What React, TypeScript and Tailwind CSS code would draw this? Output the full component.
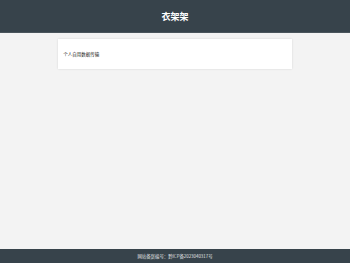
import React from 'react';

const App: React.FC = () => {
    return (
        <div className="min-h-screen flex flex-col bg-[#f3f3f3] font-['Noto_Sans_CJK_SC',sans-serif]">
            <header className="h-[33px] bg-[#37434b] flex items-center justify-center border-b border-[#4a555c]">
                <h1 className="text-[9px] font-bold text-white leading-none">衣架架</h1>
            </header>

            <main className="flex-1 pt-[6px]">
                <div className="w-2/3 mx-auto h-[30px] bg-white flex items-center px-[5px] shadow-[0_0_2px_rgba(0,0,0,0.12)]">
                    <span className="text-[4.5px] text-[#222] leading-none">个人自用数据传输</span>
                </div>
            </main>

            <footer className="h-[14px] bg-[#37434b] flex items-center justify-center">
                <span className="text-[4.4px] text-[#e2e4e6] leading-none">网站备案编号：黔ICP备2023040317号</span>
            </footer>
        </div>
    );
};

export default App;
